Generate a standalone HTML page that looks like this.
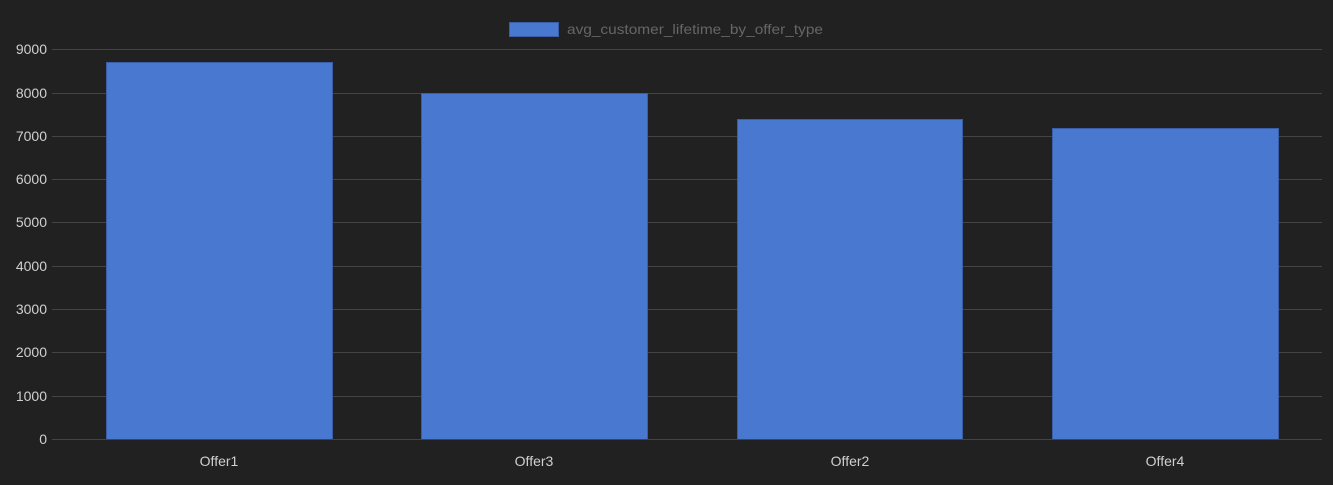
<!DOCTYPE html>
<html><head><meta charset="utf-8"><style>
html,body{margin:0;padding:0;background:#212121;}
svg{display:block;font-family:"Liberation Sans",Arial,sans-serif;}
</style></head><body>
<svg width="1333" height="485" viewBox="0 0 1333 485" xmlns="http://www.w3.org/2000/svg">
<rect width="1333" height="485" fill="#212121"/>
<g stroke="#444" stroke-width="1">
<line x1="52" x2="1322" y1="49.5" y2="49.5"/>
<line x1="52" x2="1322" y1="93.5" y2="93.5"/>
<line x1="52" x2="1322" y1="136.5" y2="136.5"/>
<line x1="52" x2="1322" y1="179.5" y2="179.5"/>
<line x1="52" x2="1322" y1="222.5" y2="222.5"/>
<line x1="52" x2="1322" y1="266.5" y2="266.5"/>
<line x1="52" x2="1322" y1="309.5" y2="309.5"/>
<line x1="52" x2="1322" y1="352.5" y2="352.5"/>
<line x1="52" x2="1322" y1="396.5" y2="396.5"/>
</g>
<g fill="#4878d0" stroke="#3a5fa8" stroke-width="1">
<rect x="106.5" y="62.5" width="226" height="377"/>
<rect x="421.5" y="93.5" width="226" height="346"/>
<rect x="737.5" y="119.5" width="225" height="320"/>
<rect x="1052.5" y="128.5" width="226" height="311"/>
</g>
<line x1="52" x2="1322" y1="439.5" y2="439.5" stroke="#444"/>
<g fill="#d0d0d0" font-size="14" text-anchor="end">
<text x="47" y="54">9000</text>
<text x="47" y="98">8000</text>
<text x="47" y="141">7000</text>
<text x="47" y="184">6000</text>
<text x="47" y="227">5000</text>
<text x="47" y="271">4000</text>
<text x="47" y="314">3000</text>
<text x="47" y="357">2000</text>
<text x="47" y="401">1000</text>
<text x="47" y="444">0</text>
</g>
<g fill="#d0d0d0" font-size="14" text-anchor="middle">
<text x="219" y="466">Offer1</text>
<text x="534" y="466">Offer3</text>
<text x="850" y="466">Offer2</text>
<text x="1165" y="466">Offer4</text>
</g>
<rect x="509.5" y="22.5" width="49" height="14" fill="#4878d0" stroke="#3a5fa8"/>
<text x="567" y="34" fill="#666" font-size="14" textLength="256" lengthAdjust="spacingAndGlyphs">avg_customer_lifetime_by_offer_type</text>
</svg>
</body></html>
